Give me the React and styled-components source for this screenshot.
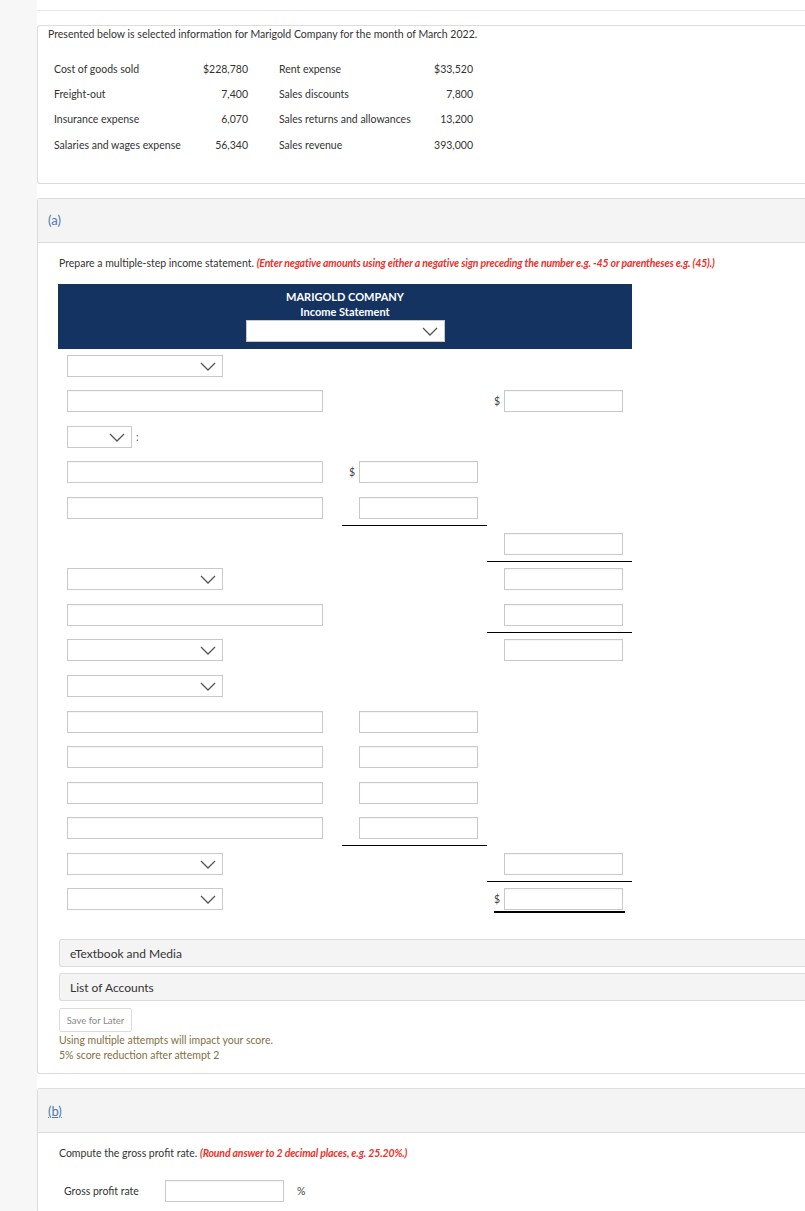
import styled, { createGlobalStyle } from "styled-components";

const GlobalStyle = createGlobalStyle`
  html, body {
    margin: 0;
    padding: 0;
    overflow: hidden;
    background: #f7f7f7;
    font-family: Lato, "Open Sans", sans-serif;
    color: #333;
  }
  * {
    box-sizing: border-box;
  }
`;

const data = [
  ["Cost of goods sold", "$228,780", "Rent expense", "$33,520"],
  ["Freight-out", "7,400", "Sales discounts", "7,800"],
  ["Insurance expense", "6,070", "Sales returns and allowances", "13,200"],
  ["Salaries and wages expense", "56,340", "Sales revenue", "393,000"],
];

// each row: [first column kind, second column, third column]
// kinds: "select", "small", "wide", null ; amounts: "in", "$in", "in-line", "$in-double"
const rows = [
  ["select", null, null],
  ["wide", null, "$in"],
  ["small", null, null],
  ["wide", "$in", null],
  ["wide", "in-line", null],
  [null, null, "in-line"],
  ["select", null, "in"],
  ["wide", null, "in-line"],
  ["select", null, "in"],
  ["select", null, null],
  ["wide", "in", null],
  ["wide", "in", null],
  ["wide", "in", null],
  ["wide", "in-line", null],
  ["select", null, "in-line"],
  ["select", null, "$in-double"],
];

const Chevron = () => (
  <svg width="16" height="9" viewBox="0 0 16 9">
    <polyline
      points="1,1 8,8 15,1"
      fill="none"
      stroke="#555"
      strokeWidth="1.3"
    />
  </svg>
);

const Select = ({ width }) => (
  <SelectBox width={width}>
    <Chevron />
  </SelectBox>
);

const AmountCell = ({ kind }) => {
  if (!kind) return <Cell />;
  const dollar = kind.startsWith("$");
  const line = kind.endsWith("line");
  const double = kind.endsWith("double");
  return (
    <Cell line={line} align="end">
      <Amount double={double}>
        {dollar && <Dollar>$</Dollar>}
        <Input width={119} />
      </Amount>
    </Cell>
  );
};

const LabelCell = ({ kind }) => {
  if (kind === "select")
    return (
      <Cell>
        <Select width={156} />
      </Cell>
    );
  if (kind === "small")
    return (
      <Cell>
        <Select width={65} />
        <Colon>:</Colon>
      </Cell>
    );
  if (kind === "wide")
    return (
      <Cell>
        <Input width={256} />
      </Cell>
    );
  return <Cell />;
};

const App = () => {
  return (
    <>
      <GlobalStyle />
      <Page>
        <TopStrip />
        <Card>
          <Intro>
            Presented below is selected information for Marigold Company for
            the month of March 2022.
          </Intro>
          <DataTable>
            {data.map((r) => (
              <DataRow key={r[0]}>
                <span>{r[0]}</span>
                <Num>{r[1]}</Num>
                <span>{r[2]}</span>
                <Num>{r[3]}</Num>
              </DataRow>
            ))}
          </DataTable>
        </Card>

        <Card>
          <PartHeader>
            <PartLabel>(a)</PartLabel>
          </PartHeader>
          <Content>
            <Instruction>
              Prepare a multiple-step income statement.{" "}
              <Hint>
                (Enter negative amounts using either a negative sign preceding
                the number e.g. -45 or parentheses e.g. (45).)
              </Hint>
            </Instruction>
            <Statement>
              <StatementHead>
                <div>MARIGOLD COMPANY</div>
                <div>Income Statement</div>
                <Select width={199} />
              </StatementHead>
              {rows.map((r, i) => (
                <Row key={i}>
                  <LabelCell kind={r[0]} />
                  <AmountCell kind={r[1]} />
                  <AmountCell kind={r[2]} />
                </Row>
              ))}
            </Statement>
            <Bars>
              <Bar>eTextbook and Media</Bar>
              <Bar>List of Accounts</Bar>
            </Bars>
            <SaveButton>Save for Later</SaveButton>
            <Attempts>
              Using multiple attempts will impact your score.
              <br />
              5% score reduction after attempt 2
            </Attempts>
          </Content>
        </Card>

        <Card>
          <PartHeader>
            <PartLabel underline>(b)</PartLabel>
          </PartHeader>
          <Content>
            <Instruction>
              Compute the gross profit rate.{" "}
              <Hint>(Round answer to 2 decimal places, e.g. 25.20%.)</Hint>
            </Instruction>
            <RateRow>
              <RateLabel>Gross profit rate</RateLabel>
              <Input width={119} />
              <Percent>%</Percent>
            </RateRow>
          </Content>
        </Card>
      </Page>
    </>
  );
};

const Page = styled.div`
  margin-left: 37px;
  background: #fff;
  min-height: 1211px;
`;

const TopStrip = styled.div`
  height: 11px;
  border-bottom: 1px solid #e8e8e8;
  margin-bottom: 14px;
`;

const Card = styled.div`
  border: 1px solid #dcdcdc;
  border-right: none;
  border-radius: 3px 0 0 3px;
  margin-bottom: 14px;
  background: #fff;
`;

const Intro = styled.div`
  font-size: 10.5px;
  line-height: 14px;
  padding: 1px 10px 0;
`;

const DataTable = styled.div`
  margin: 15px 0 0 16px;
  padding-bottom: 25px;
  font-size: 10.5px;
`;

const DataRow = styled.div`
  display: grid;
  grid-template-columns: 140px 54px 172px 53px;
  height: 25.4px;
  align-items: center;
  span:nth-child(3) {
    padding-left: 31px;
  }
`;

const Num = styled.span`
  text-align: right;
`;

const PartHeader = styled.div`
  height: 44px;
  background: #f4f4f4;
  border-bottom: 1px solid #dcdcdc;
  display: flex;
  align-items: center;
  padding-left: 10px;
`;

const PartLabel = styled.span`
  font-size: 13px;
  color: #4a78ad;
  text-decoration: ${(p) => (p.underline ? "underline" : "none")};
`;

const Content = styled.div`
  padding: 13px 0 10px 21px;
`;

const Instruction = styled.div`
  font-size: 10.5px;
  line-height: 14px;
`;

const Hint = styled.span`
  color: #e8312b;
  font-weight: 700;
  font-style: italic;
  letter-spacing: -0.15px;
`;

const Statement = styled.div`
  margin: 14px 0 0 -1px;
  width: 574px;
`;

const StatementHead = styled.div`
  background: #153361;
  color: #fff;
  font-weight: 700;
  font-size: 11px;
  line-height: 15px;
  padding: 5px 0 7px;
  display: flex;
  flex-direction: column;
  align-items: center;
  margin-bottom: 6px;
  > div:last-child {
    margin-top: 1px;
  }
`;

const Row = styled.div`
  display: grid;
  grid-template-columns: 284px 145px 145px;
  margin-bottom: 6.6px;
`;

const Cell = styled.div`
  height: 29px;
  display: flex;
  align-items: flex-start;
  justify-content: ${(p) => (p.align === "end" ? "flex-end" : "flex-start")};
  padding: ${(p) => (p.align === "end" ? "0 9px 0 0" : "0 0 0 9px")};
  border-bottom: 1px solid ${(p) => (p.line ? "#000" : "transparent")};
`;

const Amount = styled.div`
  display: flex;
  height: ${(p) => (p.double ? "25px" : "22px")};
  align-items: flex-start;
  padding-right: ${(p) => (p.double ? "2px" : "0")};
  margin-right: ${(p) => (p.double ? "-2px" : "0")};
  border-bottom: ${(p) => (p.double ? "2px solid #000" : "none")};
`;

const Input = styled.div`
  width: ${(p) => p.width}px;
  height: 22px;
  border: 1px solid #c9c9c9;
  background: #fff;
  box-shadow: inset 0 1px 1px rgba(0, 0, 0, 0.04);
`;

const SelectBox = styled.div`
  width: ${(p) => p.width}px;
  height: 22px;
  border: 1px solid #c9c9c9;
  background: #fff;
  display: flex;
  align-items: center;
  justify-content: flex-end;
  padding-right: 6px;
  svg {
    margin-top: 1px;
  }
`;

const Dollar = styled.span`
  font-size: 10.5px;
  color: #444;
  margin-right: 4px;
  line-height: 22px;
`;

const Colon = styled.span`
  font-size: 10.5px;
  color: #555;
  margin-left: 4px;
  line-height: 22px;
`;

const Bars = styled.div`
  margin-top: 22px;
  display: flex;
  flex-direction: column;
  gap: 6px;
`;

const Bar = styled.div`
  height: 28px;
  background: #f4f4f4;
  border: 1px solid #dcdcdc;
  border-right: none;
  border-radius: 3px 0 0 3px;
  display: flex;
  align-items: center;
  padding-left: 10px;
  font-size: 12px;
  color: #333;
`;

const SaveButton = styled.div`
  margin-top: 7px;
  width: 73px;
  height: 24px;
  border: 1px solid #dcdcdc;
  border-radius: 2px;
  display: flex;
  align-items: center;
  justify-content: center;
  font-size: 9.5px;
  color: #888;
`;

const Attempts = styled.div`
  margin-top: 1px;
  font-size: 10.5px;
  line-height: 15px;
  color: #84703f;
`;

const RateRow = styled.div`
  display: flex;
  align-items: center;
  margin-top: 20px;
  padding-left: 5px;
`;

const RateLabel = styled.span`
  font-size: 10.5px;
  width: 101px;
`;

const Percent = styled.span`
  font-size: 10.5px;
  margin-left: 13px;
  color: #444;
`;

export default App;
